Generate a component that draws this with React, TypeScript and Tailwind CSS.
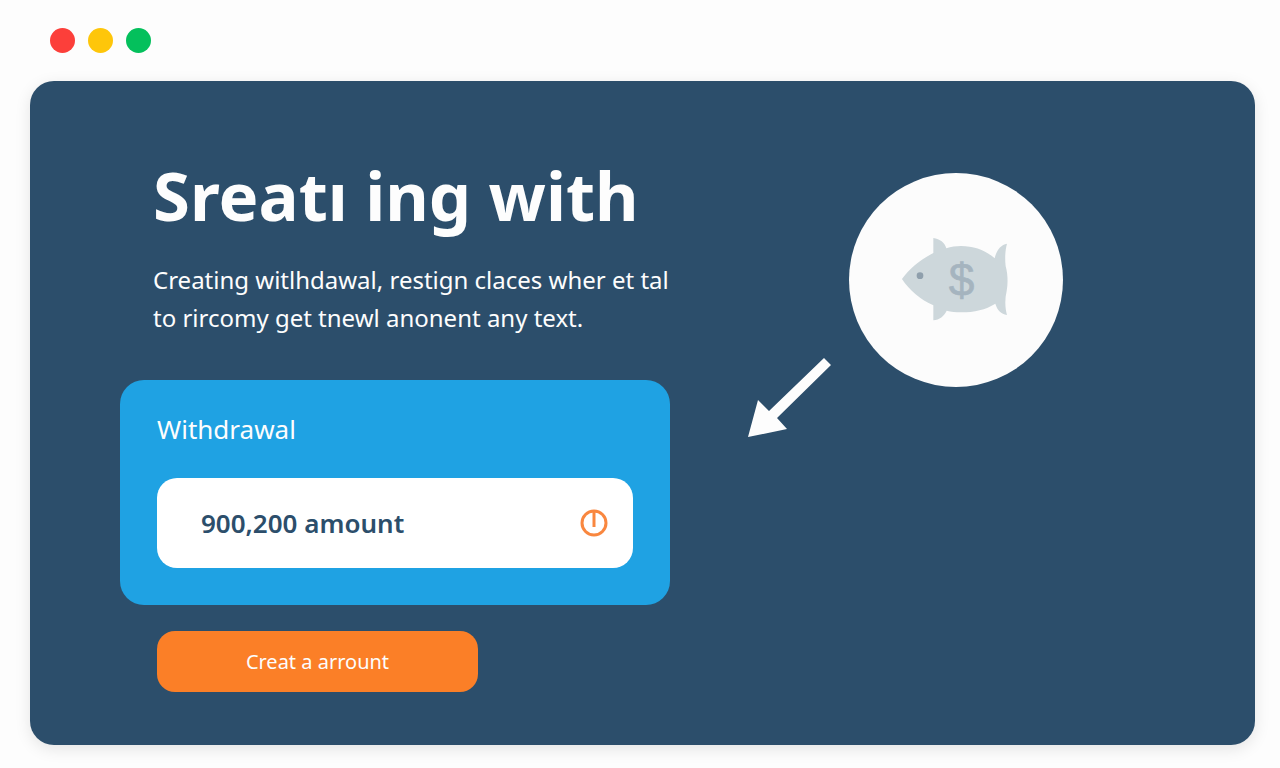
import { useState } from 'react';

const windowDots = ['bg-[#fc3f3a]', 'bg-[#fec60a]', 'bg-[#04c05c]'];

const PowerIcon = () => (
  <svg className="w-7 h-7 shrink-0" viewBox="0 0 28 28" fill="none" stroke="#f9873f" strokeWidth="3" aria-hidden="true">
    <circle cx="14" cy="14" r="12" />
    <path d="M14 3v15" />
  </svg>
);

const ArrowIcon = () => (
  <svg className="w-[83px] h-20 shrink-0" viewBox="0 0 83 80" fill="#fdfdfd" aria-hidden="true">
    <path d="M76 0L83 7L29 60L39 71L0 79L10 42L21 53Z" />
  </svg>
);

const FishIcon = () => (
  <svg className="w-[106px] h-[83px] overflow-visible" viewBox="188 236 318 249" aria-hidden="true">
    <g fill="#cdd7db">
      <path d="M185 356C207 326 237 300 279 278V233C299 236 313 246 318 264C332 259 347 257 362 257C402 257 436 270 463 294C469 268 482 253 500 250C495 268 493 292 496 318C503 342 503 370 499 392C493 418 494 442 500 464C482 461 471 450 465 430C436 448 402 456 362 456C347 456 332 455 319 451C311 468 298 478 279 480V435C241 418 207 390 185 356Z" />
    </g>
    <circle cx="239" cy="346" r="10" fill="#8f9fac" />
    <text
      x="364"
      y="406"
      textAnchor="middle"
      fontSize="138"
      fill="#a5b4bf"
      className="font-['Liberation_Sans',sans-serif]"
      stroke="#a5b4bf"
      strokeWidth="2"
    >
      $
    </text>
  </svg>
);

const App = () => {
  const [amount, setAmount] = useState('900,200 amount');

  return (
    <div className="min-h-screen bg-[#fdfdfd] pl-[30px] pr-[25px] pb-[23px] font-['Noto_Sans',sans-serif]">
      {/* Window bar */}
      <header className="flex items-center gap-[13px] h-[81px] px-5">
        {windowDots.map((color) => (
          <span key={color} className={`w-[25px] h-[25px] rounded-full ${color}`} />
        ))}
      </header>

      <main className="flex items-start rounded-3xl bg-[#2c4e6b] pt-[74px] pb-[53px] pl-[90px] shadow-[0_4px_16px_rgba(0,0,0,0.1)]">
        <section className="w-[550px] shrink-0">
          <div className="px-[33px] text-[#fdfdfd]">
            <h1 className="text-[67px] leading-[80px] font-bold whitespace-nowrap">Sreatı ing with</h1>
            <p className="mt-[26px] text-[24px] leading-[38px] whitespace-nowrap">
              Creating witlhdawal, restign claces wher et tal
              <br />
              to rircomy get tnewl anonent any text.
            </p>
          </div>

          {/* Withdrawal card */}
          <form className="mt-[43px]" onSubmit={(e) => e.preventDefault()}>
            <div className="rounded-3xl bg-[#1fa2e3] px-[37px] pt-[29px] pb-[37px]">
              <label htmlFor="amount" className="block text-[26px] leading-10 text-[#fdfdfd]">
                Withdrawal
              </label>
              <div className="mt-[29px] flex items-center h-[90px] rounded-[20px] bg-white pl-11 pr-[25px]">
                <input
                  id="amount"
                  type="text"
                  value={amount}
                  onChange={(e) => setAmount(e.target.value)}
                  className="flex-1 min-w-0 bg-transparent text-[26px] leading-10 font-semibold text-[#2c4e6b] outline-none"
                />
                <PowerIcon />
              </div>
            </div>
            <button
              type="submit"
              className="mt-[26px] ml-[37px] w-[321px] h-[61px] rounded-[18px] bg-[#fb7f27] text-[20px] text-[#fdfdfd]"
            >
              Creat a arrount
            </button>
          </form>
        </section>

        <section className="flex items-end gap-[18px] pl-[78px] pt-[18px]">
          <ArrowIcon />
          <div className="mb-[51px] flex items-center justify-center w-[214px] h-[214px] shrink-0 rounded-full bg-[#fcfcfc]">
            <FishIcon />
          </div>
        </section>
      </main>
    </div>
  );
};

export default App;
